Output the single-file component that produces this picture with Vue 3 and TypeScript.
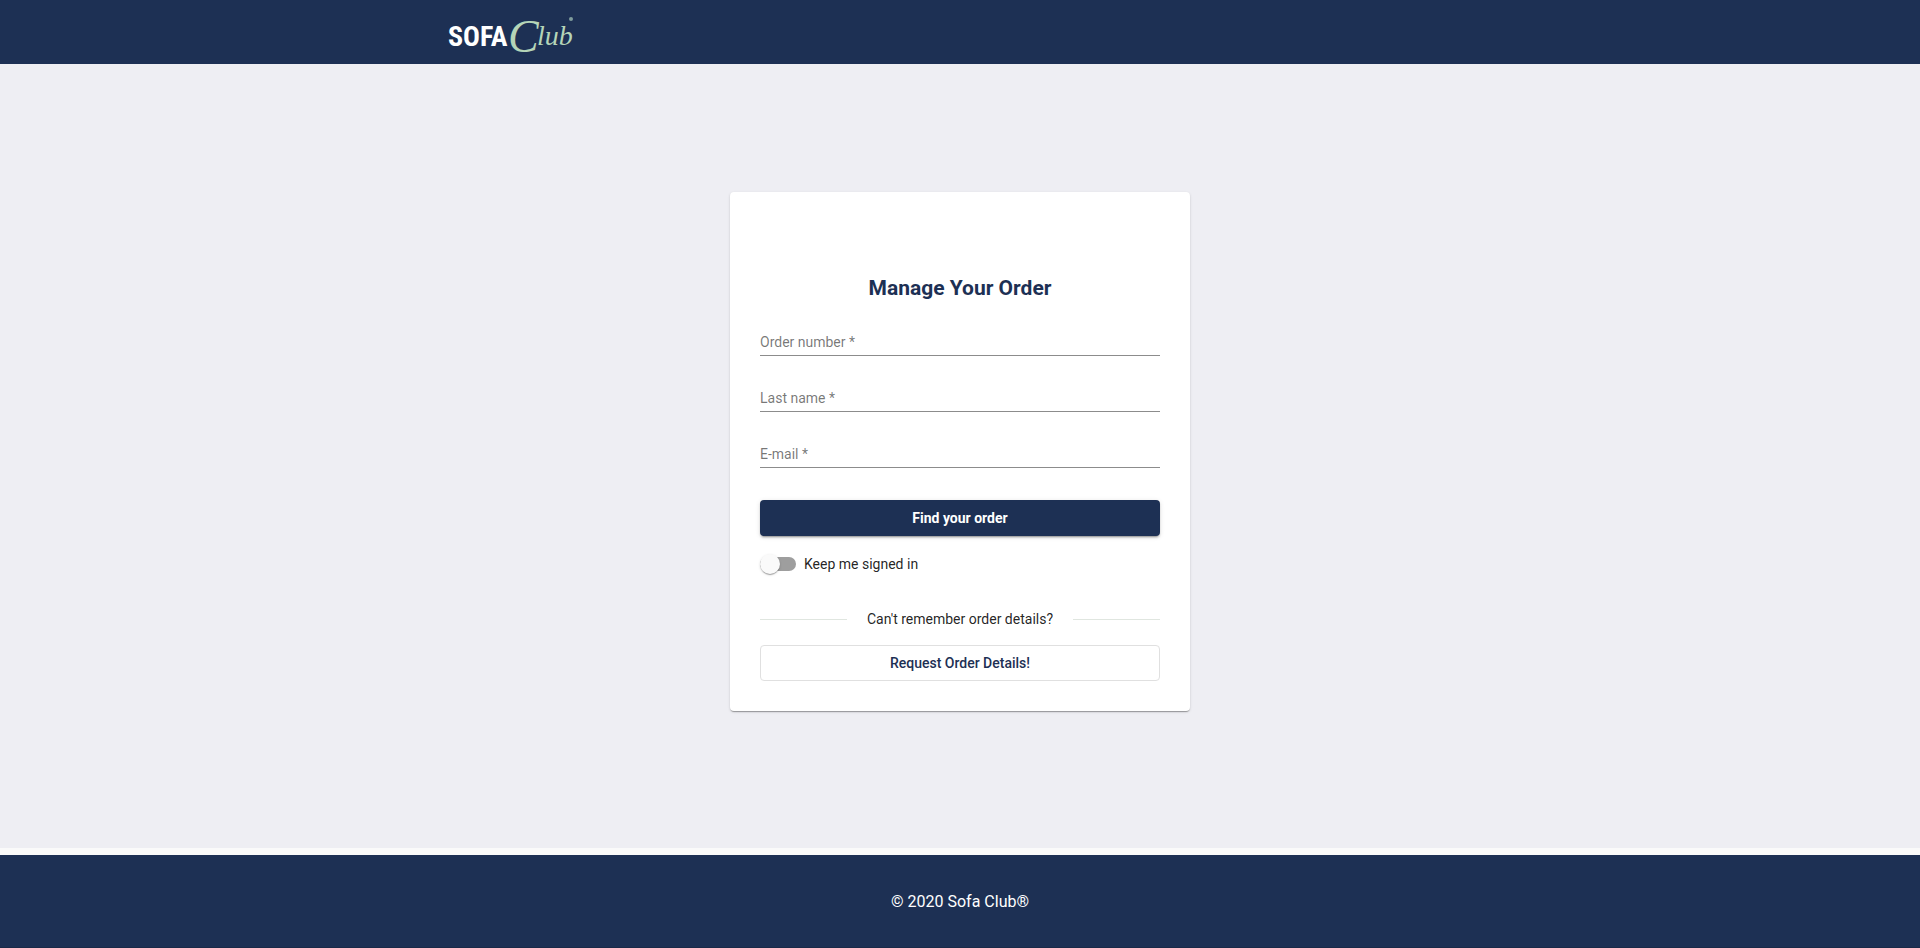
<script setup lang="ts">
import { reactive, ref } from 'vue'

interface Field {
  id: 'order' | 'lastName' | 'email'
  label: string
  type: string
}

const fields: Field[] = [
  { id: 'order', label: 'Order number *', type: 'text' },
  { id: 'lastName', label: 'Last name *', type: 'text' },
  { id: 'email', label: 'E-mail *', type: 'email' },
]

const values = reactive({ order: '', lastName: '', email: '' })
const keepSignedIn = ref(false)
</script>

<template>
  <div class="page">
    <header class="topbar">
      <div class="container">
        <a class="logo" href="#">
          <svg viewBox="0 0 128 48" width="128" height="48" role="img">
            <text class="logo-sofa" x="0" y="38">SOFA</text>
            <text class="logo-c" x="60" y="44">C</text>
            <text class="logo-club" x="89" y="37">lub</text>
            <circle class="logo-dot" cx="123" cy="11" r="2" />
          </svg>
        </a>
      </div>
    </header>

    <main class="content">
      <form class="card" @submit.prevent>
        <h1 class="title">Manage Your Order</h1>
        <div v-for="field in fields" :key="field.id" class="field">
          <input
            :id="field.id"
            v-model="values[field.id]"
            class="field-input"
            :type="field.type"
            placeholder=" "
          />
          <label class="field-label" :for="field.id">{{ field.label }}</label>
        </div>
        <button class="button primary" type="submit">Find your order</button>
        <label class="toggle" for="keep">
          <input id="keep" v-model="keepSignedIn" class="toggle-input" type="checkbox" />
          <span>Keep me signed in</span>
        </label>
        <div class="divider"><span>Can't remember order details?</span></div>
        <button class="button outline" type="button">Request Order Details!</button>
      </form>
    </main>

    <footer class="footer">© 2020 Sofa Club®</footer>
  </div>
</template>

<style>
body {
  background: #fafafa;
}
</style>

<style scoped>
.page {
  display: flex;
  flex-direction: column;
  min-height: 100vh;
  font-family: Roboto, 'Liberation Sans', sans-serif;
  font-size: 14px;
  line-height: 20px;
  color: rgba(0, 0, 0, 0.87);
}

.topbar {
  background: #1d3054;
}

.container {
  display: flex;
  align-items: center;
  box-sizing: border-box;
  width: 100%;
  max-width: 1024px;
  height: 64px;
  margin: 0 auto;
}

.logo {
  display: flex;
}

.logo svg {
  overflow: visible;
}

.logo-sofa {
  fill: #fff;
  font: bold 28px 'Roboto Condensed', Roboto, 'Liberation Sans', sans-serif;
}

.logo-c,
.logo-club {
  fill: #b5d5b8;
  font: italic 46px 'Liberation Serif', serif;
}

.logo-club {
  font-size: 28px;
}

.logo-dot {
  fill: #7f9c9c;
}

.content {
  display: flex;
  flex: 1;
  align-items: center;
  justify-content: center;
  margin-bottom: 7px;
  padding-bottom: 9px;
  background: #eeeef3;
}

.card {
  display: flex;
  flex-direction: column;
  box-sizing: border-box;
  width: 460px;
  padding: 80px 30px 30px;
  border-radius: 4px;
  background: #fff;
  box-shadow:
    0 2px 1px -1px rgba(0, 0, 0, 0.2),
    0 1px 1px 0 rgba(0, 0, 0, 0.14),
    0 1px 3px 0 rgba(0, 0, 0, 0.12);
}

.title {
  margin: 0 0 24px;
  color: #1d3054;
  font-size: 21px;
  font-weight: 700;
  line-height: 32px;
  text-align: center;
}

.field {
  display: grid;
  margin-bottom: 28px;
}

.field-input,
.field-label {
  grid-area: 1 / 1;
}

.field-input {
  box-sizing: border-box;
  height: 28px;
  padding: 0;
  border: 0;
  border-bottom: 1px solid #8c8c8c;
  border-radius: 0;
  outline: 0;
  background: transparent;
  color: inherit;
  font: inherit;
}

.field-label {
  align-self: center;
  color: rgba(0, 0, 0, 0.54);
  pointer-events: none;
}

.field-input:not(:placeholder-shown) + .field-label {
  visibility: hidden;
}

.button {
  height: 36px;
  border: 0;
  border-radius: 4px;
  font: 500 14px Roboto, 'Liberation Sans', sans-serif;
  cursor: pointer;
}

.primary {
  margin-top: 4px;
  background: #1d3054;
  color: #fff;
  font-weight: 700;
  box-shadow:
    0 3px 1px -2px rgba(0, 0, 0, 0.2),
    0 2px 2px 0 rgba(0, 0, 0, 0.14),
    0 1px 5px 0 rgba(0, 0, 0, 0.12);
}

.outline {
  border: 1px solid #e0e0e0;
  background: #fff;
  color: #1d3054;
}

.toggle {
  display: flex;
  gap: 8px;
  align-items: center;
  align-self: flex-start;
  height: 24px;
  margin: 16px 0 33px;
}

.toggle-input {
  display: flex;
  align-items: center;
  width: 36px;
  height: 14px;
  margin: 0;
  border-radius: 8px;
  appearance: none;
  background: #9e9e9e;
}

.toggle-input::before {
  width: 20px;
  height: 20px;
  flex: none;
  border-radius: 50%;
  background: #fafafa;
  box-shadow:
    0 2px 1px -1px rgba(0, 0, 0, 0.2),
    0 1px 1px 0 rgba(0, 0, 0, 0.14),
    0 1px 3px 0 rgba(0, 0, 0, 0.12);
  content: '';
}

.toggle-input:checked {
  justify-content: flex-end;
}

.divider {
  display: flex;
  gap: 20px;
  align-items: center;
  margin-bottom: 16px;
}

.divider::before,
.divider::after {
  flex: 1;
  height: 1px;
  background: #e0e6e0;
  content: '';
}

.footer {
  padding: 37px 0 35px;
  border-bottom: 1px solid #1a2947;
  background: #1d3054;
  color: #fff;
  font-size: 16px;
  text-align: center;
}
</style>
